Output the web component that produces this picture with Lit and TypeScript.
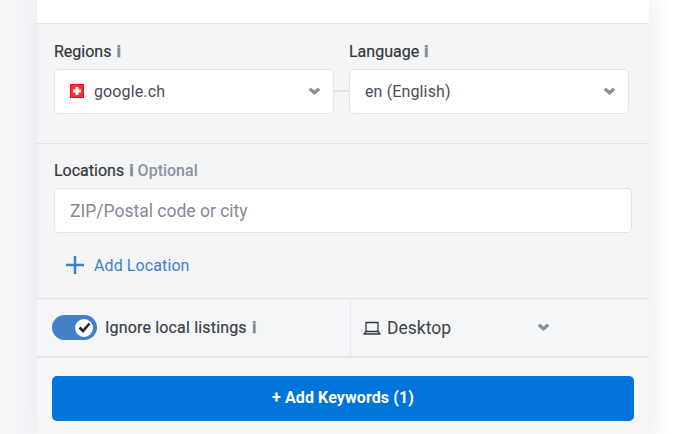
import { LitElement, html, css, svg } from "lit";
import { customElement } from "lit/decorators.js";

const chevron = svg`<svg class="chev" width="13" height="9" viewBox="0 0 13 9"><path d="M1.800 1.800l4.700 4 4.700-4" fill="none" stroke="#87919e" stroke-width="3.400"/></svg>`;

@customElement("app-root")
export class AppRoot extends LitElement {
  static override styles = css`
    :host {
      display: block;
      height: 434px;
      overflow: hidden;
      background: linear-gradient(90deg, #f5f6f8 0, #f5f6f8 620px, #ffffff 679px);
      font-family: Roboto, "Liberation Sans", sans-serif;
      color: #3c4048;
    }
    .card {
      width: 612px;
      height: 434px;
      margin-left: 37px;
      background: #f4f5f7;
      box-shadow: 0 0 24px rgba(60, 70, 90, 0.08);
      display: flex;
      flex-direction: column;
    }
    .top {
      height: 23px;
      background: #fff;
      border-bottom: 1px solid #e1e5eb;
    }
    .regions {
      height: 119px;
      border-bottom: 1px solid #e1e5eb;
      padding: 0 20px 0 17px;
      display: flex;
      align-items: flex-start;
    }
    .field {
      display: flex;
      flex-direction: column;
      width: 280px;
    }
    .link {
      width: 15px;
      height: 2px;
      margin-top: 66px;
      background: #dfe4eb;
    }
    .label {
      font-size: 16px;
      font-weight: 400;
      -webkit-text-stroke: 0.2px #33373d;
      line-height: 18px;
      color: #33373d;
      margin-top: 19px;
      margin-bottom: 8px;
    }
    .i {
      color: #808b9a;
      -webkit-text-stroke: 0.3px #808b9a;
      font-size: 17px;
      line-height: 16px;
      font-weight: 700;
      margin-left: 1px;
    }
    .opt {
      color: #8a94a1;
      -webkit-text-stroke: 0;
      font-weight: 500;
    }
    .select {
      height: 45px;
      box-sizing: border-box;
      background: #fff;
      border: 1px solid #e1e5eb;
      border-radius: 5px;
      display: flex;
      align-items: center;
      font-size: 16px;
      letter-spacing: 0.13px;
      padding: 0 12px 0 15px;
    }
    .select .val {
      flex: 1;
      color: #4a4e55;
    }
    .flag {
      width: 14px;
      height: 14px;
      margin: -1px 10px 0 0;
      flex: none;
    }
    .locations {
      height: 154px;
      border-bottom: 1px solid #dfe4eb;
      padding: 0 17px;
      display: flex;
      flex-direction: column;
    }
    .locations .label {
      margin-top: 18px;
      margin-bottom: 8px;
    }
    .input {
      height: 45px;
      box-sizing: border-box;
      width: 578px;
      background: #fff;
      border: 1px solid #e1e5eb;
      border-radius: 5px;
      display: flex;
      align-items: center;
      padding-left: 15px;
      font-size: 17.500px;
      color: #7f8b9a;
    }
    .add {
      display: flex;
      align-items: center;
      margin: 21px 0 0 12px;
      height: 22px;
      color: #3f80cc;
      font-size: 16px;
      letter-spacing: 0.1px;
      gap: 10px;
    }
    .options {
      height: 57px;
      background: #f5f6f8;
      border-bottom: 2px solid #e1e6ed;
      display: flex;
    }
    .toggle-cell {
      width: 314px;
      box-sizing: border-box;
      padding-left: 15px;
      border-right: 1px solid #e4e7ec;
      display: flex;
      align-items: center;
      font-size: 16px;
      font-weight: 400;
      -webkit-text-stroke: 0.2px #3a3e45;
      color: #3a3e45;
      gap: 8px;
      letter-spacing: 0.17px;
    }
    .toggle {
      width: 45px;
      height: 25px;
      border-radius: 13px;
      background: #4480c8;
      display: flex;
      align-items: center;
      justify-content: flex-end;
      padding-right: 4px;
      box-sizing: border-box;
    }
    .knob {
      width: 18px;
      height: 18px;
      border-radius: 50%;
      background: #fff;
      display: flex;
      align-items: center;
      justify-content: center;
    }
    .device {
      display: flex;
      align-items: center;
      padding-left: 12px;
      font-size: 17.500px;
      color: #3f434a;
      gap: 6px;
    }
    .device .chev {
      margin-left: 80px;
    }
    .footer {
      flex: 1;
      padding: 18px 15px 0;
      background: #f5f6f8;
    }
    button {
      display: block;
      width: 582px;
      height: 45px;
      border: 0;
      border-radius: 5px;
      padding: 0 0 2px;
      background: #0074d9;
      color: #fff;
      font: 700 16px Roboto, "Liberation Sans", sans-serif;
      letter-spacing: 0.1px;
    }
  `;

  override render() {
    return html`
      <div class="card">
        <div class="top"></div>
        <div class="regions">
          <div class="field">
            <div class="label">Regions <span class="i">i</span></div>
            <div class="select">
              <svg class="flag" viewBox="0 0 14 14">
                <rect width="14" height="14" fill="#f5071b" />
                <rect x="1" y="1" width="12" height="12" fill="#ff3038" />
                <path d="M5.500 3h3v2.500H11v3H8.500V11h-3V8.500H3v-3h2.500z" fill="#fff" />
              </svg>
              <span class="val">google.ch</span>
              ${chevron}
            </div>
          </div>
          <div class="link"></div>
          <div class="field">
            <div class="label">Language <span class="i">i</span></div>
            <div class="select">
              <span class="val">en (English)</span>
              ${chevron}
            </div>
          </div>
        </div>
        <div class="locations">
          <div class="label">Locations <span class="i">i</span> <span class="opt">Optional</span></div>
          <div class="input">ZIP/Postal code or city</div>
          <div class="add">
            <svg width="18" height="18" viewBox="0 0 18 18">
              <path d="M9 0v18M0 9h18" fill="none" stroke="#3f80cc" stroke-width="2.500" />
            </svg>
            Add Location
          </div>
        </div>
        <div class="options">
          <div class="toggle-cell">
            <div class="toggle">
              <div class="knob">
                <svg width="13" height="11" viewBox="0 0 13 11">
                  <path d="M1.500 5.500l3.500 3.500 6.500-7.500" fill="none" stroke="#23272e" stroke-width="2.600" />
                </svg>
              </div>
            </div>
            <span>Ignore local listings <span class="i">i</span></span>
          </div>
          <div class="device">
            <svg width="18" height="14" viewBox="0 0 18 14">
              <path
                d="M3 1.500h12v9H3zM3 10.500l-2 2.500h16l-2-2.500"
                fill="none"
                stroke="#33373d"
                stroke-width="1.300"
                stroke-linejoin="round"
              />
            </svg>
            <span>Desktop</span>
            ${chevron}
          </div>
        </div>
        <div class="footer"><button>+ Add Keywords (1)</button></div>
      </div>
    `;
  }
}
